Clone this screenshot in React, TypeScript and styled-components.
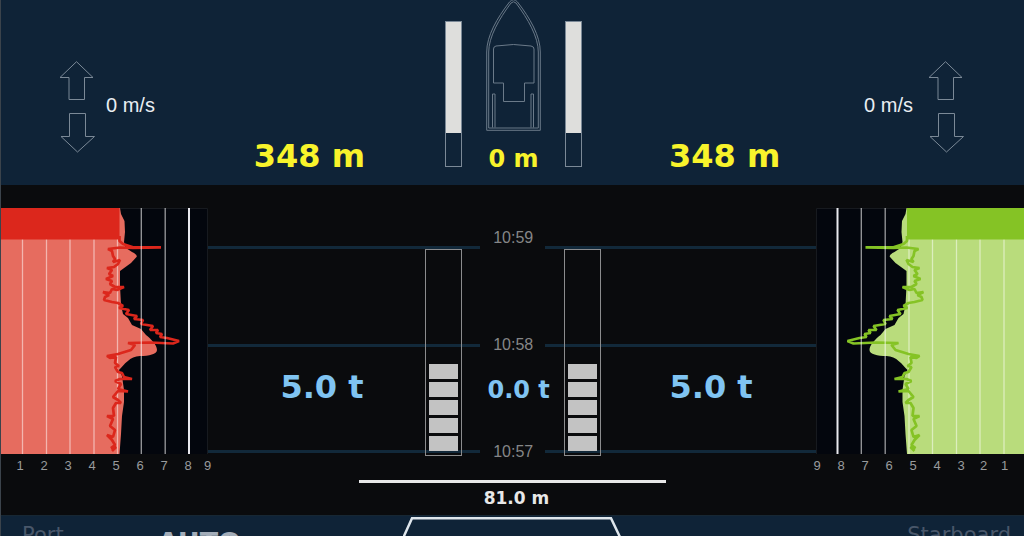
import React from 'react';
import styled, { createGlobalStyle } from 'styled-components';

const GlobalStyle = createGlobalStyle`
  *, *::before, *::after { box-sizing: border-box; }
  body { margin: 0; background: #0a0b0d; }
`;

const wide = '"DejaVu Sans", Verdana, sans-serif';
const plain = '"Liberation Sans", Arial, sans-serif';
const navy = '#0f2337';
const outline = '#7b8997';

const Screen = styled.main`
  height: 100vh;
  overflow: hidden;
  border-left: 1px solid #3b434b;
  background: #0a0b0d;
  font-family: ${wide};
`;

const Header = styled.header`
  display: grid;
  grid-template-columns: 1fr 137px 1fr;
  padding: 0 0 13px 2px;
  background: ${navy};
`;

const HeaderSide = styled.div<{ $side: 'port' | 'starboard' }>`
  display: flex;
  flex-direction: ${p => (p.$side === 'port' ? 'row' : 'row-reverse')};
  justify-content: space-between;
  align-items: flex-start;
  padding: ${p => (p.$side === 'port' ? '0 80px 0 56px' : '0 59px 0 87px')};
`;

const Speed = styled.div<{ $side: 'port' | 'starboard' }>`
  display: flex;
  flex-direction: ${p => (p.$side === 'port' ? 'row' : 'row-reverse')};
  align-items: center;
  gap: ${p => (p.$side === 'port' ? '10px' : '15px')};
  margin-top: 61px;
`;

const SpeedText = styled.span`
  padding-bottom: 5px;
  font: 400 20px/20px ${plain};
  color: #e9eef2;
`;

const Reading = styled.strong<{ $small?: boolean; $tone: 'range' | 'load' }>`
  font-weight: 700;
  font-size: ${p => (p.$small ? '24px' : '32px')};
  line-height: ${p => (p.$small ? '24px' : '32px')};
  white-space: nowrap;
  color: ${p => (p.$tone === 'range' ? '#f8f32b' : '#80c4f2')};
`;

const RangeSlot = styled.div`
  display: flex;
  padding-top: 140px;
`;

const Vessel = styled.div`
  display: grid;
  grid-template-columns: 17px 1fr 17px;
  align-items: start;
`;

const VesselMiddle = styled.div`
  display: flex;
  flex-direction: column;
  align-items: center;
  gap: 16px;
`;

const Level = styled.div`
  height: 146px;
  margin-top: 21px;
  border: 1px solid ${outline};
`;

const LevelFill = styled.div`
  height: 77%;
  background: #dededc;
`;

const Charts = styled.section`
  display: grid;
  grid-template-columns: 207px 1fr 208px;
  padding-top: 23px;
`;

const Profile = styled.figure`
  margin: 0;
  svg { display: block; }
`;

const Axis = styled.figcaption<{ $side: 'port' | 'starboard' }>`
  display: grid;
  grid-template-columns: ${p =>
    p.$side === 'port' ? 'repeat(8, 24px) 15px' : 'repeat(7, 24px) repeat(2, 21px)'};
  margin: ${p => (p.$side === 'port' ? '5px 0 0 7px' : '5px 0 0 -11px')};
  font: 400 13px/14px "Liberation Sans Narrow", ${plain};
  text-align: center;
  color: #999b9d;
`;

const Center = styled.div`
  display: grid;
  grid-template-columns: 1fr 65px 1fr;
  align-items: start;
`;

const Lane = styled.div`
  display: grid;
  margin-top: 38px;
`;

const LaneLines = styled.div`
  grid-area: 1 / 1;
  display: grid;
  grid-template-rows: 98px 106px 3px;
`;

const LaneLine = styled.div`
  height: 3px;
  background: #12293a;
`;

const LaneContent = styled.div<{ $side: 'port' | 'starboard' }>`
  grid-area: 1 / 1;
  display: flex;
  flex-direction: ${p => (p.$side === 'port' ? 'row-reverse' : 'row')};
  align-items: flex-start;
  gap: ${p => (p.$side === 'port' ? '61px' : '69px')};
  padding: 3px 18px 0 19px;
`;

const LoadSlot = styled.div`
  display: flex;
  padding-top: 122px;
`;

const Gauge = styled.div`
  display: flex;
  flex-direction: column;
  justify-content: flex-end;
  gap: 3px;
  width: 37px;
  height: 207px;
  padding: 0 3px 4px;
  border: 1px solid #8b8c8d;
`;

const GaugeCell = styled.div`
  height: 15px;
  background: #c3c3c3;
`;

const Timeline = styled.div`
  display: grid;
  grid-template-rows: 107px 41px 66px 16px;
  margin-top: 22px;
`;

const Time = styled.time`
  padding-right: 3px;
  font: 400 16px/16px ${plain};
  text-align: center;
  color: #858687;
`;

const CenterLoad = styled.div`
  padding-left: 8px;
`;

const Distance = styled.section`
  display: flex;
  flex-direction: column;
  align-items: center;
  gap: 5px;
  padding: 7px 0;
`;

const DistanceBar = styled.div`
  width: 30%;
  height: 3px;
  background: #e8e8e8;
`;

const DistanceText = styled.span`
  padding-left: 8px;
  font-size: 17px;
  font-weight: 700;
  line-height: 20px;
  color: #e8e8e8;
`;

const Footer = styled.footer`
  display: grid;
  grid-template-columns: 1fr 219px 1fr;
  align-items: start;
  background: ${navy};
  border-top: 1px solid #172733;
`;

const FooterSide = styled.div<{ $end?: boolean }>`
  display: flex;
  align-items: flex-start;
  justify-content: ${p => (p.$end ? 'flex-end' : 'flex-start')};
  gap: 94px;
  padding: 7px 13px 8px 21px;
`;

const SideName = styled.span`
  font-size: 21px;
  line-height: 24px;
  color: #49576a;
`;

const Mode = styled.strong`
  padding-top: 8px;
  font-size: 27px;
  line-height: 24px;
  color: #a3adb9;
`;

const Arrows = () => (
  <svg width="37" height="92" viewBox="0 0 37 92" fill="none" stroke={outline} aria-hidden="true">
    <path d="M17.5 .7 34 16.5H25.5V38.5H10V16.5H1Z" />
    <path d="M10.5 52.5H26.5V75.5H35.5L18.5 91 2 75.5H10.5Z" />
  </svg>
);

const Boat = () => (
  <svg width="55" height="131" viewBox="0 0 55 131" fill="none" stroke="#6b7a89" aria-hidden="true">
    <path d="M.7 130.3V52C.7 36 11 18 23.5 2Q27.5 -2.5 31.5 2C44 18 54.3 36 54.3 52V130.3Z" />
    <path d="M2.7 128V52C2.7 37 13 19 25 3Q27.5 .5 30 3C42 19 52.3 37 52.3 52V128Z" />
    <path d="M7.5 83V49Q7.5 46.5 10 46Q27.5 43 45 46Q48 46.5 48 49V83H38.5V101.5H17.5V83Z" />
    <path d="M6.5 127.5V94H9V127.5M45 127.5V94H47.5V127.5" />
  </svg>
);

const AREA =
  'M-3 0H120L121 6 124.5 13 125 24 124 34 126 40 132 44Q138 47 136.5 49L131 55 120 63V78L121 97 123 106 128 110 132 117 141 121 146 127C151 131 157 137 157 142C157 146 149 148 140 148C130 148 124 157 119 162L122 168 124 182 124 194 122 208 121 226 119.5 246H-3Z';

const TRACE =
  'M119.5 28V33L123 36 133 39.3H161L133 40 120 39.5 108 41 112 43 113 48 115 51 113 54 120 52 118 56 114 59 107 60 112 62 109 66 113 68 106 71 112 73 110 76 115 79 124 79 117 82 112 81 110 85 103 84 109 87 105 89 104 92 112 94 118 95 123 98 119 100 129 102 126 106 137 108 134 111 143 112 141 116 153 118 150 122 158 122 156 125 162 126 160 129 167 130 179 133 173 135.500 150 134.500 128 135 135 137 131 142 118 146 107 148 110 150 116 149 115 155 119 158 115 159 118 164 122 165 124 169 132 171 120 171 115 173 121 176 118 181 128 183.500 118 183 113 189 118 192 121 195 116 195 113 200 114 208 107 208 113 211 110 218 115 222 113 229 107 227 112 232 115 237 111 240 116 239 112 243';

type ProfileChartProps = {
  side: 'port' | 'starboard';
  area: string;
  strong: string;
  labels: number[];
};

const ProfileChart = ({ side, area, strong, labels }: ProfileChartProps) => {
  const port = side === 'port';
  return (
    <Profile>
      <svg
        width={port ? 207 : 208}
        height="246"
        viewBox={port ? '1 0 207 246' : '0 0 208 246'}
        role="img"
        aria-label={`${side} profile`}
      >
        <rect width="208" height="246" fill="#03060d" />
        <path d={port ? 'M207.5 246V.5H120' : 'M.5 246V.5H90'} fill="none" stroke="#171a1f" />
        <g transform={port ? undefined : 'translate(210.5 0) scale(-1 1)'}>
          <path d={AREA} fill={area} />
          {[22.5, 46.5, 70, 94, 117.5].map(x => (
            <path key={x} d={`M${x} 31V246`} stroke="#fff" strokeOpacity=".5" strokeWidth="1.3" />
          ))}
          <path d={TRACE} fill="none" stroke={strong} strokeWidth="2.7" strokeLinejoin="bevel" />
          <rect x="-3" width="122.5" height="31.5" fill={strong} />
          {[141.3, 165.2].map(x => (
            <path key={x} d={`M${x} 0V246`} stroke="#fff" strokeOpacity=".6" strokeWidth="1.3" />
          ))}
          <path d="M189 0V246" stroke="#e9e9ee" strokeWidth="2" />
        </g>
      </svg>
      <Axis $side={side}>
        {labels.map(n => (
          <span key={n}>{n}</span>
        ))}
      </Axis>
    </Profile>
  );
};

const LoadLane = ({ side, value }: { side: 'port' | 'starboard'; value: string }) => (
  <Lane>
    <LaneLines>
      <LaneLine />
      <LaneLine />
      <LaneLine />
    </LaneLines>
    <LaneContent $side={side}>
      <Gauge>
        {[1, 2, 3, 4, 5].map(n => (
          <GaugeCell key={n} />
        ))}
      </Gauge>
      <LoadSlot>
        <Reading $tone="load">{value}</Reading>
      </LoadSlot>
    </LaneContent>
  </Lane>
);

const RangePanel = ({ side }: { side: 'port' | 'starboard' }) => (
  <HeaderSide $side={side}>
    <Speed $side={side}>
      <Arrows />
      <SpeedText>0 m/s</SpeedText>
    </Speed>
    <RangeSlot>
      <Reading $tone="range">348 m</Reading>
    </RangeSlot>
  </HeaderSide>
);

const LevelBar = () => (
  <Level>
    <LevelFill />
  </Level>
);

export default function App() {
  return (
    <Screen>
      <GlobalStyle />
      <Header>
        <RangePanel side="port" />
        <Vessel>
          <LevelBar />
          <VesselMiddle>
            <Boat />
            <Reading $small $tone="range">0 m</Reading>
          </VesselMiddle>
          <LevelBar />
        </Vessel>
        <RangePanel side="starboard" />
      </Header>

      <Charts>
        <ProfileChart side="port" area="#e66c5f" strong="#dc271c" labels={[1, 2, 3, 4, 5, 6, 7, 8, 9]} />
        <Center>
          <LoadLane side="port" value="5.0 t" />
          <Timeline>
            <Time>10:59</Time>
            <Time>10:58</Time>
            <CenterLoad>
              <Reading $small $tone="load">0.0 t</Reading>
            </CenterLoad>
            <Time>10:57</Time>
          </Timeline>
          <LoadLane side="starboard" value="5.0 t" />
        </Center>
        <ProfileChart side="starboard" area="#b9dc7c" strong="#85c325" labels={[9, 8, 7, 6, 5, 4, 3, 2, 1]} />
      </Charts>

      <Distance>
        <DistanceBar />
        <DistanceText>81.0 m</DistanceText>
      </Distance>

      <Footer>
        <FooterSide>
          <SideName>Port</SideName>
          <Mode>AUTO</Mode>
        </FooterSide>
        <svg width="219" height="40" viewBox="0 0 219 40" fill="none" stroke="#dfe6ec" strokeWidth="2.5" aria-hidden="true">
          <path d="M-8 40 9 2.2H208L226 40" />
        </svg>
        <FooterSide $end>
          <SideName>Starboard</SideName>
        </FooterSide>
      </Footer>
    </Screen>
  );
}
